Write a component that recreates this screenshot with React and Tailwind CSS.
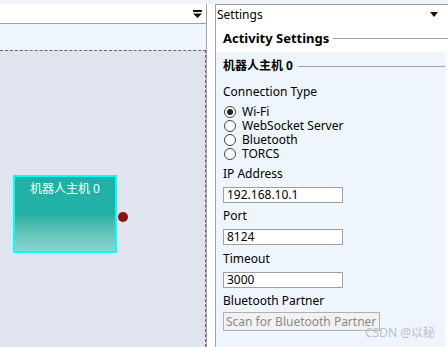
import React from "react";

const font = { fontFamily: '"Noto Sans", "Noto Sans CJK SC", sans-serif' };

function Radio({ checked, label }) {
  return (
    <div className="flex items-center h-[14px]">
      <div className="w-[12px] h-[12px] rounded-full border border-[#444] bg-white flex items-center justify-center ml-[1px]">
        {checked && <div className="w-[6px] h-[6px] rounded-full bg-[#222]" />}
      </div>
      <span className="ml-[6px] text-[12px] leading-[14px] text-black">{label}</span>
    </div>
  );
}

function Field({ value }) {
  return (
    <div className="w-[120px] h-[16px] border border-[#a0a0a0] bg-white flex items-center pl-[3px] text-[12px] leading-[14px] text-black">
      {value}
    </div>
  );
}

export default function App() {
  return (
    <div className="w-[448px] h-[347px] bg-[#eef3fa] pt-[4px] flex overflow-hidden" style={font}>
      {/* Left panel */}
      <div className="w-[207px] flex flex-col border-r border-[#a0a0a0]">
        <div className="h-[20px] bg-white border-b border-[#a0a0a0] flex items-center justify-end pr-[3px]">
          <svg width="10" height="8" viewBox="0 0 10 8">
            <rect x="0" y="0" width="9" height="2" fill="#111" />
            <path d="M0 3.5 H9 L4.5 8 Z" fill="#111" />
          </svg>
        </div>
        <div className="h-[26px] bg-[#eef5fd]" />
        <div className="flex-1 bg-[#dfe4ee] border-t border-r border-dashed border-[#666] relative">
          <div className="absolute left-[13px] top-[124px] w-[104px] h-[78px] border-2 border-[#00ffff] bg-gradient-to-b from-[#1eb0a6] via-[#23b1a7] to-[#8ad6ce] flex justify-center">
            <span className="text-white text-[12px] leading-[14px] mt-[5px]">机器人主机 0</span>
          </div>
          <div className="absolute left-[118px] top-[161px] w-[10px] h-[10px] rounded-full bg-[#8c1212]" />
        </div>
      </div>
      {/* Gap */}
      <div className="w-[8px] bg-white" />
      {/* Right panel */}
      <div className="flex-1 flex flex-col bg-white border-l border-t border-[#a0a0a0]">
        <div className="h-[19px] flex items-center justify-between pl-[1px] pr-[10px]">
          <span className="text-[12px] leading-[14px] text-black">Settings</span>
          <svg width="8" height="5" viewBox="0 0 8 5">
            <path d="M0 0 H8 L4 5 Z" fill="#111" />
          </svg>
        </div>
        <div className="h-[28px] flex items-center pl-[7px]">
          <span className="text-[13px] leading-[16px] font-bold text-black">Activity Settings</span>
          <div className="flex-1 h-px bg-[#a0a0a0] ml-[4px]" />
        </div>
        <div className="flex-1 bg-[#eef5fd] mr-[3px] pl-[7px] pt-[6px] relative">
          <div className="flex items-center h-[16px]">
            <span className="text-[12px] leading-[16px] font-bold text-black">机器人主机 0</span>
            <div className="flex-1 h-px bg-[#a0a0a0] ml-[5px]" />
          </div>
          <div className="text-[12px] leading-[16px] text-black mt-[10px]">Connection Type</div>
          <div className="flex flex-col mt-[5px]">
            <Radio checked label="Wi-Fi" />
            <Radio label="WebSocket Server" />
            <Radio label="Bluetooth" />
            <Radio label="TORCS" />
          </div>
          <div className="text-[12px] leading-[16px] text-black mt-[5px]">IP Address</div>
          <div className="mt-[5px]"><Field value="192.168.10.1" /></div>
          <div className="text-[12px] leading-[16px] text-black mt-[5px]">Port</div>
          <div className="mt-[5px]"><Field value="8124" /></div>
          <div className="text-[12px] leading-[16px] text-black mt-[6px]">Timeout</div>
          <div className="mt-[5px]"><Field value="3000" /></div>
          <div className="text-[12px] leading-[16px] text-black mt-[5px]">Bluetooth Partner</div>
          <div className="mt-[3px] w-[157px] h-[19px] border border-[#b0b0b0] bg-[#f2f2f2] overflow-hidden whitespace-nowrap pl-[2px] text-[12px] leading-[17px] text-[#8a8a8a]">
            Scan for Bluetooth Partner
          </div>
          <div className="absolute left-[149px] top-[274px] text-[12px] leading-[14px] text-[#bcc0c8] whitespace-nowrap">CSDN @以秘</div>
        </div>
      </div>
    </div>
  );
}
